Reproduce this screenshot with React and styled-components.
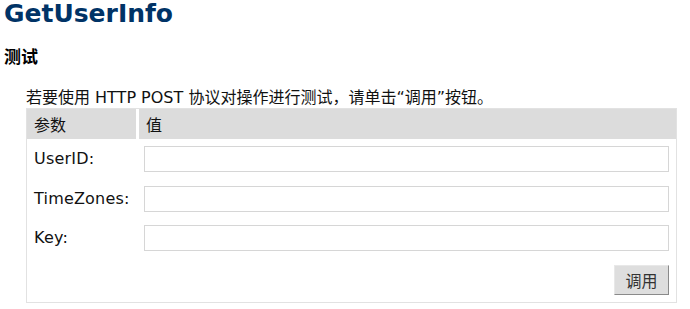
import React from "react";
import styled, { createGlobalStyle } from "styled-components";

const Global = createGlobalStyle`
  html, body { margin: 0; padding: 0; background: #fff; }
  body {
    font-family: "DejaVu Sans", Verdana, "Noto Sans CJK SC", sans-serif;
    color: #000;
  }
`;

const Page = styled.div`
  padding: 0 0 0 4px;
  width: 690px;
  box-sizing: border-box;
`;

const Title = styled.h1`
  margin: 0;
  font-family: "DejaVu Sans", "Noto Sans CJK SC", sans-serif;
  font-weight: bold;
  font-size: 25px;
  line-height: 28px;
  color: #003366;
`;

const Section = styled.h2`
  margin: 19px 0 0 0;
  font-family: "DejaVu Sans", "Noto Sans CJK SC", sans-serif;
  font-weight: bold;
  font-size: 17px;
  line-height: 20px;
`;

const Indent = styled.div`
  margin-left: 22px;
`;

const Intro = styled.p`
  margin: 21px 0 0 0;
  font-size: 16px;
  line-height: 20px;
  font-family: "DejaVu Sans", "Noto Sans CJK SC", sans-serif;
  color: #111;
`;

const Panel = styled.div`
  width: 651px;
  box-sizing: border-box;
  border: 1px solid #e2e2e2;
  display: grid;
  grid-template-columns: 109px 1fr;
  column-gap: 3px;
  row-gap: 0;
`;

const HeadCell = styled.div`
  background: #dcdcdc;
  height: 30px;
  display: flex;
  align-items: center;
  padding-left: ${(p) => p.$pad}px;
  font-size: 16px;
  font-family: "DejaVu Sans", "Noto Sans CJK SC", sans-serif;
  color: #111;
`;

const Body = styled.div`
  grid-column: 1 / -1;
  display: grid;
  grid-template-columns: 112px 1fr;
  row-gap: 13.5px;
  padding: 7px 7px 7px 0;
`;

const Label = styled.label`
  display: flex;
  align-items: center;
  padding-left: 7px;
  font-size: 16px;
  line-height: 20px;
  letter-spacing: 0.2px;
  color: #111;
`;

const Field = styled.input`
  box-sizing: border-box;
  height: 26px;
  width: 525px;
  margin-left: 5px;
  border: 1px solid #d6d6d6;
  background: #fff;
  padding: 0 4px;
  font-size: 14px;
  outline: none;
`;

const ButtonRow = styled.div`
  grid-column: 1 / -1;
  display: flex;
  justify-content: flex-end;
`;

const Invoke = styled.button`
  width: 55px;
  height: 30px;
  box-sizing: border-box;
  background: #dedede;
  border: 1px solid;
  border-color: #e8e8e8 #8a8a8a #8a8a8a #e8e8e8;
  font-family: "Noto Sans CJK SC", sans-serif;
  font-size: 16px;
  color: #333;
  padding: 0;
`;

const params = ["UserID", "TimeZones", "Key"];

export default function App() {
  return (
    <Page>
      <Global />
      <Title>GetUserInfo</Title>
      <Section>测试</Section>
      <Indent>
        <Intro>若要使用 HTTP POST 协议对操作进行测试，请单击“调用”按钮。</Intro>
        <Panel>
          <HeadCell $pad={7}>参数</HeadCell>
          <HeadCell $pad={7}>值</HeadCell>
          <Body>
            {params.map((p) => (
              <React.Fragment key={p}>
                <Label>{p}:</Label>
                <Field type="text" name={p} />
              </React.Fragment>
            ))}
            <ButtonRow>
              <Invoke type="button">调用</Invoke>
            </ButtonRow>
          </Body>
        </Panel>
      </Indent>
    </Page>
  );
}
